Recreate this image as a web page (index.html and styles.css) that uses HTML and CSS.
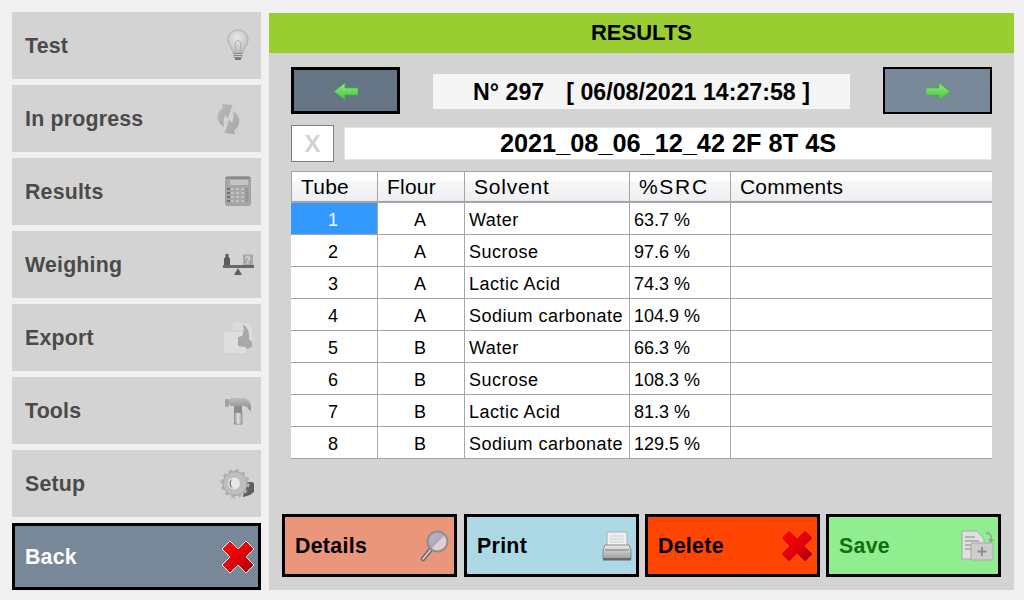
FILE: index.html
```html
<!DOCTYPE html>
<html lang="en">
<head>
<meta charset="utf-8">
<title>Results</title>
<link rel="stylesheet" href="styles.css">
</head>
<body>
<svg class="defs" width="0" height="0" aria-hidden="true">
  <defs>
    <linearGradient id="redx" x1="0" y1="0" x2="1" y2="1"><stop offset="0" stop-color="#ff0a0a"/><stop offset="0.55" stop-color="#e00008"/><stop offset="1" stop-color="#990010"/></linearGradient>
    <linearGradient id="greyv" x1="0" y1="0" x2="0" y2="1"><stop offset="0" stop-color="#ececec"/><stop offset="1" stop-color="#9c9c9c"/></linearGradient>
    <linearGradient id="hammer" x1="0" y1="0" x2="0" y2="1"><stop offset="0" stop-color="#bcbcbc"/><stop offset="1" stop-color="#8c8c8c"/></linearGradient>
    <linearGradient id="recy" x1="0" y1="0" x2="1" y2="1"><stop offset="0" stop-color="#bcbcbc"/><stop offset="1" stop-color="#a4a4a4"/></linearGradient>
    <linearGradient id="greenl" x1="0" y1="0" x2="0" y2="1"><stop offset="0" stop-color="#8cf07a"/><stop offset="1" stop-color="#46c040"/></linearGradient>
    <radialGradient id="bulb" cx="0.45" cy="0.35" r="0.7"><stop offset="0" stop-color="#e8e8e8"/><stop offset="1" stop-color="#bcbcbc"/></radialGradient>
    <linearGradient id="lens" x1="0" y1="0" x2="1" y2="1"><stop offset="0" stop-color="#c2b8d0"/><stop offset="0.5" stop-color="#b0a6bc"/><stop offset="0.55" stop-color="#e0d0d4"/><stop offset="1" stop-color="#efc6c0"/></linearGradient>
  </defs>
</svg>
<div class="app">
  <nav class="side">
    <button class="nav">Test
      <svg class="nav-ico" viewBox="0 0 40 34"><path d="M22 1c5.800 0 10 4.200 10 9.800 0 4.400-3 6.800-4.500 10.700-.3.800-.4 1.500-.5 2.500h-10c-.1-1-.2-1.700-.5-2.500C15 17.600 12 15.200 12 10.800 12 5.200 16.200 1 22 1z" fill="url(#bulb)" stroke="#aeaeae"/><path d="M20 23l-1-9 3-3 3 3-1 9" fill="none" stroke="#b0b0b0"/><rect x="17.500" y="24" width="9" height="5" fill="#8a8a8a"/><path d="M17.500 25.500h9M17.500 27.500h9" stroke="#c8c8c8"/><rect x="19" y="29" width="6" height="2" fill="#777"/></svg>
    </button>
    <button class="nav">In progress
      <svg class="nav-ico" viewBox="0 0 40 34"><g fill="url(#recy)"><path d="M16.500 3L11.500 17 9.500 13C7.500 16 7 20 8 25 2 21 0 15 3 10 4 8 5.500 6.500 7 5.500L6 2z"/><path d="M8.500 31L13.500 17 15.500 21C17.500 18 18 14 17 9 23 13 25 19 22 24 21 26 19.500 27.500 18 28.500L19 32z"/></g></svg>
    </button>
    <button class="nav">Results
      <svg class="nav-ico" viewBox="0 0 40 34"><rect x="9.500" y="1.500" width="25" height="29" rx="2" fill="#a6a6a6" stroke="#a0a0a0"/><rect x="10" y="2" width="24" height="2" fill="#8a8a8a"/><rect x="14" y="5" width="18" height="5" fill="#c4c4c4"/><g fill="#c2c2c2"><rect x="15" y="13" width="3" height="2"/><rect x="20" y="13" width="3" height="2"/><rect x="25" y="13" width="3" height="2"/><rect x="15" y="17" width="3" height="2"/><rect x="20" y="17" width="3" height="2"/><rect x="25" y="17" width="3" height="2"/><rect x="15" y="21" width="3" height="2"/><rect x="20" y="21" width="3" height="2"/><rect x="25" y="21" width="3" height="2"/><rect x="15" y="25" width="3" height="2"/><rect x="20" y="25" width="3" height="2"/><rect x="25" y="25" width="3" height="2"/></g><g fill="#707070"><rect x="11" y="13" width="3" height="2"/><rect x="11" y="17" width="3" height="2"/><rect x="11" y="21" width="3" height="2"/><rect x="11" y="25" width="3" height="2"/></g><rect x="29.500" y="13" width="3" height="14" fill="#969696"/></svg>
    </button>
    <button class="nav">Weighing
      <svg class="nav-ico" viewBox="0 0 40 34"><rect x="7" y="17" width="31" height="3" fill="#686868"/><path d="M18 27l4-7 4 7z" fill="#5e5e5e"/><path d="M8 17v-6.500l1.500-1.500V6h3v3l1.500 1.500V17z" fill="#5a5a5a"/><rect x="27" y="6.500" width="10" height="10.500" fill="#a8a8a8"/><text class="qm" x="32" y="15.500" text-anchor="middle">?</text></svg>
    </button>
    <button class="nav">Export
      <svg class="nav-ico" viewBox="0 0 40 34"><path d="M17 2h15l4 4v22l-3 1H17z" fill="#dcdcdc"/><path d="M7 10h19l5 5v18H7z" fill="#dedede" stroke="#cbcbcb"/><path d="M27 3c4 3 7 8 6 15l3 3v5l-4 2-3-2-7-1v-9l4-1c2-3 2-8 1-12z" fill="#a8a8a8"/></svg>
    </button>
    <button class="nav">Tools
      <svg class="nav-ico" viewBox="0 0 40 34"><path d="M13 6l2-2h12c5 0 8 4 8 9v4l-2-1c-1-3-3-4-5-4H15l-2-2z" fill="url(#hammer)"/><rect x="9" y="5" width="4" height="8" rx="1" fill="#a4a4a4"/><rect x="18" y="12" width="8" height="6" fill="#8c8c8c"/><rect x="18.500" y="18.500" width="7.500" height="11.500" fill="#b8b8b8" stroke="#909090"/><rect x="21" y="19" width="2.500" height="11" fill="#dadada"/></svg>
    </button>
    <button class="nav">Setup
      <svg class="nav-ico" viewBox="0 0 40 34"><path d="M29 15h7l2 1v9l-4 3-7 2z" fill="#5f5f5f"/><circle cx="19" cy="16.500" r="13" fill="none" stroke="#b2b2b2" stroke-width="3" stroke-dasharray="3.400 3.400"/><circle cx="19" cy="16.500" r="12" fill="#bebebe" stroke="#a4a4a4"/><circle cx="18" cy="16.500" r="6" fill="#e8e8e8"/><path d="M13.500 16.500a5 5 0 0 1 3-4.500 6 6 0 0 0 1 9.500 5 5 0 0 1-4-5z" fill="#666"/></svg>
    </button>
    <button class="nav nav-back">Back
      <svg class="nav-ico" viewBox="0 0 40 34"><path d="M14 1l8 8 8-8 8 8-8 8 8 8-8 8-8-8-8 8-8-8 8-8-8-8z" fill="url(#redx)" stroke="#f4f4f4" stroke-width="1" stroke-linejoin="round"/></svg>
    </button>
  </nav>
  <main class="panel">
    <h1 class="head">RESULTS</h1>
    <div class="pager">
      <button class="arrow arrow-on">
        <svg class="arrow-ico" viewBox="0 0 24 17"><path d="M0 8.500L11 0v5h13v7H11v5z" fill="url(#greenl)" stroke="#3eb83a" stroke-width="0.700"/></svg>
      </button>
      <div class="stamp"><span>N° 297</span><span>[ 06/08/2021 14:27:58 ]</span></div>
      <button class="arrow">
        <svg class="arrow-ico" viewBox="0 0 24 17"><path d="M24 8.500L13 0v5H0v7h13v5z" fill="url(#greenl)" stroke="#3eb83a" stroke-width="0.700"/></svg>
      </button>
    </div>
    <div class="name-row">
      <div class="clear">X</div>
      <div class="name">2021_08_06_12_42 2F 8T 4S</div>
    </div>
    <table class="grid">
      <colgroup><col class="c1"><col class="c2"><col class="c3"><col class="c4"><col class="c5"></colgroup>
      <thead>
        <tr><th>Tube</th><th>Flour</th><th class="th-solvent">Solvent</th><th class="th-src">%SRC</th><th>Comments</th></tr>
      </thead>
      <tbody>
        <tr><td class="mid sel">1</td><td class="mid">A</td><td class="word">Water</td><td>63.7 %</td><td></td></tr>
        <tr><td class="mid">2</td><td class="mid">A</td><td class="word">Sucrose</td><td>97.6 %</td><td></td></tr>
        <tr><td class="mid">3</td><td class="mid">A</td><td class="word">Lactic Acid</td><td>74.3 %</td><td></td></tr>
        <tr><td class="mid">4</td><td class="mid">A</td><td class="word">Sodium carbonate</td><td>104.9 %</td><td></td></tr>
        <tr><td class="mid">5</td><td class="mid">B</td><td class="word">Water</td><td>66.3 %</td><td></td></tr>
        <tr><td class="mid">6</td><td class="mid">B</td><td class="word">Sucrose</td><td>108.3 %</td><td></td></tr>
        <tr><td class="mid">7</td><td class="mid">B</td><td class="word">Lactic Acid</td><td>81.3 %</td><td></td></tr>
        <tr><td class="mid">8</td><td class="mid">B</td><td class="word">Sodium carbonate</td><td>129.5 %</td><td></td></tr>
      </tbody>
    </table>
    <div class="actions">
      <button class="act act-details">Details
        <svg class="act-ico" viewBox="0 0 36 36"><path d="M8 31l9-11" stroke="#686868" stroke-width="4.500" stroke-linecap="round"/><path d="M8 31l9-11" stroke="#d8d8d8" stroke-width="1.500" stroke-linecap="round"/><circle cx="22.500" cy="13.500" r="10" fill="url(#lens)" stroke="#8f8f8f" stroke-width="2"/></svg>
      </button>
      <button class="act act-print">Print
        <svg class="act-ico" viewBox="0 0 36 36"><rect x="10" y="4" width="20" height="16" fill="#efefef" stroke="#b0b0b0"/><path d="M13 8h14M13 11h14M13 14h14" stroke="#cfcfcf"/><path d="M8 17h24l2 5v9H6v-9z" fill="url(#greyv)" stroke="#8c8c8c"/><path d="M8 22h24" stroke="#7a7a7a"/><rect x="6" y="30" width="28" height="2.500" fill="#6a6a6a"/></svg>
      </button>
      <button class="act act-delete">Delete
        <svg class="act-ico" viewBox="0 0 36 36"><path d="M11 2l8 8 8-8 8 8-8 8 8 8-8 8-8-8-8 8-8-8 8-8-8-8z" fill="url(#redx)" stroke="#ff6a4a" stroke-width="0.600" stroke-linejoin="round"/></svg>
      </button>
      <button class="act act-save">Save
        <svg class="act-ico" viewBox="0 0 36 36"><path d="M3 3h15l7 8v20H3z" fill="#e0e0e0" stroke="#a8a8a8"/><path d="M6 9h10M6 13h14M6 17h14M6 21h10" stroke="#848484"/><path d="M27 5c3 0 5 1 5 4v3" fill="none" stroke="#9a9a9a" stroke-width="1.500"/><path d="M29 11h6l-3 4z" fill="#9a9a9a"/><rect x="12" y="15" width="22" height="17" rx="1" fill="#cdcdcd" stroke="#aaa"/><path d="M23 19v9M18.500 23.500h9" stroke="#8e8e8e" stroke-width="2"/></svg>
      </button>
    </div>
  </main>
</div>
</body>
</html>
```
FILE: styles.css
```css
* { box-sizing: border-box; }
html, body { margin: 0; height: 100%; }
body {
  background: #f0f0f0;
  font-family: "Liberation Sans", Arial, sans-serif;
  overflow: hidden;
}
button { font-family: inherit; margin: 0; cursor: pointer; }
.defs { display: block; height: 0; }

.app {
  display: flex;
  gap: 8px;
  padding: 12px 10px 10px 12px;
  height: 600px;
}
.side {
  width: 249px;
  flex: none;
  display: flex;
  flex-direction: column;
  gap: 6px;
}
.nav {
  height: 67px;
  display: flex;
  align-items: center;
  justify-content: space-between;
  padding: 2px 5px 0 13px;
  background: #d3d3d3;
  border: 0;
  color: #4a4a4a;
  font-size: 21.33px;
  font-weight: bold;
  letter-spacing: 0.2px;
  text-align: left;
}
.nav-back {
  background: #778899;
  color: #fff;
  border: 3px solid #000;
  padding: 2px 2px 0 10px;
}
.nav-ico { width: 40px; height: 34px; flex: none; margin-top: -2px; }
.qm { font-size: 10px; font-weight: bold; fill: #d8d8d8; }

.panel {
  width: 745px;
  flex: none;
  margin-top: 1px;
  background: #d3d3d3;
  display: flex;
  flex-direction: column;
}
.head {
  margin: 0;
  height: 40px;
  background: #9acd32;
  color: #000;
  font-size: 22px;
  font-weight: bold;
  line-height: 40px;
  text-align: center;
}
.pager {
  display: flex;
  align-items: flex-start;
  justify-content: space-between;
  margin: 14px 22px 0;
  height: 47px;
}
.arrow {
  width: 109px;
  height: 47px;
  background: #778899;
  border: 2px solid #000;
  display: flex;
  align-items: center;
  justify-content: center;
  padding: 2px 0 0;
}
.arrow-on { background: #667585; border-width: 3px; }
.arrow-ico { width: 24px; height: 17px; }
.stamp {
  width: 417px;
  height: 35px;
  margin-top: 7px;
  padding-top: 1px;
  background: #f5f5f5;
  display: flex;
  align-items: center;
  justify-content: center;
  gap: 22px;
  font-size: 23.2px;
  font-weight: bold;
  color: #000;
}
.name-row {
  display: flex;
  gap: 10px;
  align-items: center;
  margin: 11px 22px 0;
  height: 37px;
}
.clear {
  width: 43px;
  height: 37px;
  background: #fff;
  border: 1px solid #808080;
  color: #d3d3d3;
  font-size: 24px;
  font-weight: bold;
  line-height: 35px;
  text-align: center;
}
.name {
  flex: 1;
  height: 33px;
  background: #fff;
  border: 1px solid #e3e3e3;
  font-size: 25.3px;
  font-weight: bold;
  line-height: 31px;
  text-align: center;
  color: #000;
}
.grid {
  margin: 9px 0 0 22px;
  width: 701px;
  border-collapse: separate;
  border-spacing: 0;
  table-layout: fixed;
  background: #fff;
  font-size: 18px;
  color: #000;
}
.c1 { width: 87px; }
.c2 { width: 87px; }
.c3 { width: 165px; }
.c4 { width: 101px; }
.grid th {
  height: 32px;
  padding: 1px 0 1px 9px;
  font-size: 21px;
  letter-spacing: 0.2px;
  font-weight: normal;
  text-align: left;
  background: linear-gradient(#ffffff 0, #ffffff 9px, #f5f6f8 10px, #eff0f3 28px, #e4e4e4 29px, #ffffff 30px);
  border-top: 1px solid #a6a6a6;
  border-right: 1px solid #a6a6a6;
  border-bottom: 2px solid #a6a6a6;
}
.grid th:first-child { border-left: 1px solid #a6a6a6; }
.grid th:last-child { border-right: 0; }
.grid th.th-solvent { letter-spacing: 0.8px; }
.grid th.th-src { letter-spacing: 1.7px; }
.grid td {
  height: 32px;
  padding: 3px 0 0 4px;
  border-right: 1px solid #a6a6a6;
  border-bottom: 1px solid #a6a6a6;
  white-space: nowrap;
}
.grid td:last-child { border-right: 0; }
.grid td.word { letter-spacing: 0.5px; }
.grid td.mid { text-align: center; padding: 3px 2px 0 0; }
.grid td.sel { background: #3399ff; color: #fff; }

.actions {
  display: flex;
  gap: 6px;
  margin: auto 0 13px 13px;
}
.act {
  width: 175px;
  height: 63px;
  display: flex;
  align-items: center;
  justify-content: space-between;
  padding: 2px 3px 0 10px;
  border: 3px solid #000;
  color: #000;
  font-size: 21.33px;
  font-weight: bold;
  letter-spacing: 0.3px;
}
.act-ico { width: 36px; height: 36px; flex: none; margin-top: -2px; }
.act-details { background: #e9967a; }
.act-print { background: #add8e6; margin-left: 1px; }
.act-delete { background: #ff4500; }
.act-save { background: #90ee90; color: #127012; }
```
